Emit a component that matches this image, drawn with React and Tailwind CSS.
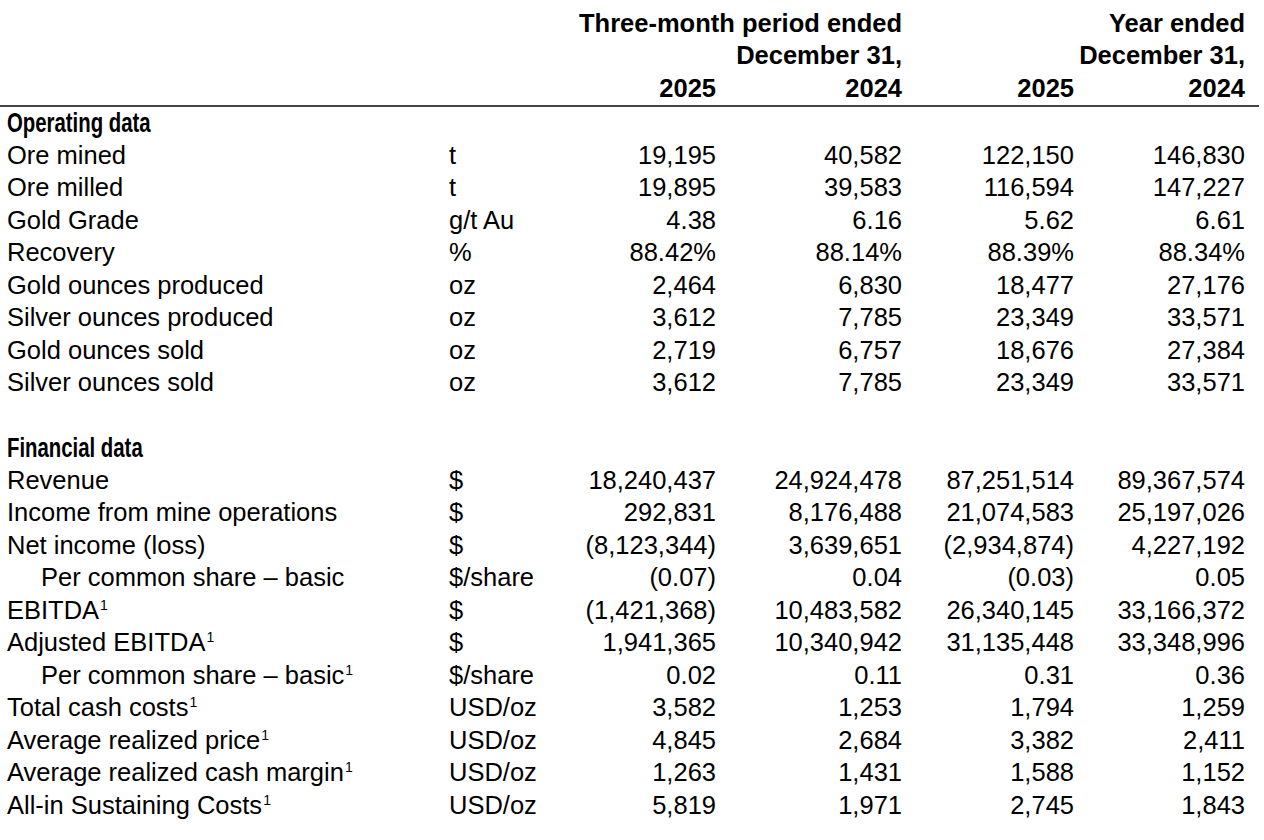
const OPERATING = [
  { label: "Ore mined", unit: "t", values: ["19,195", "40,582", "122,150", "146,830"] },
  { label: "Ore milled", unit: "t", values: ["19,895", "39,583", "116,594", "147,227"] },
  { label: "Gold Grade", unit: "g/t Au", values: ["4.38", "6.16", "5.62", "6.61"] },
  { label: "Recovery", unit: "%", values: ["88.42%", "88.14%", "88.39%", "88.34%"] },
  { label: "Gold ounces produced", unit: "oz", values: ["2,464", "6,830", "18,477", "27,176"] },
  { label: "Silver ounces produced", unit: "oz", values: ["3,612", "7,785", "23,349", "33,571"] },
  { label: "Gold ounces sold", unit: "oz", values: ["2,719", "6,757", "18,676", "27,384"] },
  { label: "Silver ounces sold", unit: "oz", values: ["3,612", "7,785", "23,349", "33,571"] },
];

const FINANCIAL = [
  { label: "Revenue", unit: "$", values: ["18,240,437", "24,924,478", "87,251,514", "89,367,574"] },
  { label: "Income from mine operations", unit: "$", values: ["292,831", "8,176,488", "21,074,583", "25,197,026"] },
  { label: "Net income (loss)", unit: "$", values: ["(8,123,344)", "3,639,651", "(2,934,874)", "4,227,192"] },
  { label: "Per common share – basic", unit: "$/share", indent: true, values: ["(0.07)", "0.04", "(0.03)", "0.05"] },
  { label: "EBITDA", note: true, unit: "$", values: ["(1,421,368)", "10,483,582", "26,340,145", "33,166,372"] },
  { label: "Adjusted EBITDA", note: true, unit: "$", values: ["1,941,365", "10,340,942", "31,135,448", "33,348,996"] },
  { label: "Per common share – basic", note: true, unit: "$/share", indent: true, values: ["0.02", "0.11", "0.31", "0.36"] },
  { label: "Total cash costs", note: true, unit: "USD/oz", values: ["3,582", "1,253", "1,794", "1,259"] },
  { label: "Average realized price", note: true, unit: "USD/oz", values: ["4,845", "2,684", "3,382", "2,411"] },
  { label: "Average realized cash margin", note: true, unit: "USD/oz", values: ["1,263", "1,431", "1,588", "1,152"] },
  { label: "All-in Sustaining Costs", note: true, unit: "USD/oz", values: ["5,819", "1,971", "2,745", "1,843"] },
];

const GRID = "grid grid-cols-[442px_130px_137px_186px_172px_171px] h-[32.5px] items-center";

function Row({ row }) {
  return (
    <div className={GRID}>
      <div className={`whitespace-nowrap ${row.indent ? "pl-[34px]" : ""}`}>
        {row.label}
        {row.note && <sup className="text-[14px] -top-[9px] ml-[1px]">1</sup>}
      </div>
      <div>{row.unit}</div>
      {row.values.map((v, i) => (
        <div key={i} className="text-right whitespace-nowrap">{v}</div>
      ))}
    </div>
  );
}

function Section({ title }) {
  return (
    <div className={GRID}>
      <div className="col-span-6">
        <span className="inline-block text-[27.5px] font-bold whitespace-nowrap origin-left scale-x-[0.74]">{title}</span>
      </div>
    </div>
  );
}

export default function App() {
  return (
    <div className="w-[1264px] h-[840px] bg-white text-black font-['Liberation_Sans',Arial,sans-serif] text-[25.5px] leading-none">
      <div className="w-[1259px] pt-[7px]">
        <div className="pl-[7px] pr-[14px] border-b-2 border-[#444] font-bold">
          <div className={GRID}>
            <div className="col-start-3 col-span-2 text-right whitespace-nowrap">Three-month period ended</div>
            <div className="col-span-2 text-right">Year ended</div>
          </div>
          <div className={GRID}>
            <div className="col-start-3 col-span-2 text-right">December 31,</div>
            <div className="col-span-2 text-right">December 31,</div>
          </div>
          <div className={GRID}>
            <div className="col-start-3 text-right">2025</div>
            <div className="text-right">2024</div>
            <div className="text-right">2025</div>
            <div className="text-right">2024</div>
          </div>
        </div>
        <div className="pl-[7px] pr-[14px]">
          <Section title="Operating data" />
          {OPERATING.map((r, i) => <Row key={i} row={r} />)}
          <div className="h-[32.5px]" />
          <Section title="Financial data" />
          {FINANCIAL.map((r, i) => <Row key={i} row={r} />)}
        </div>
      </div>
    </div>
  );
}
